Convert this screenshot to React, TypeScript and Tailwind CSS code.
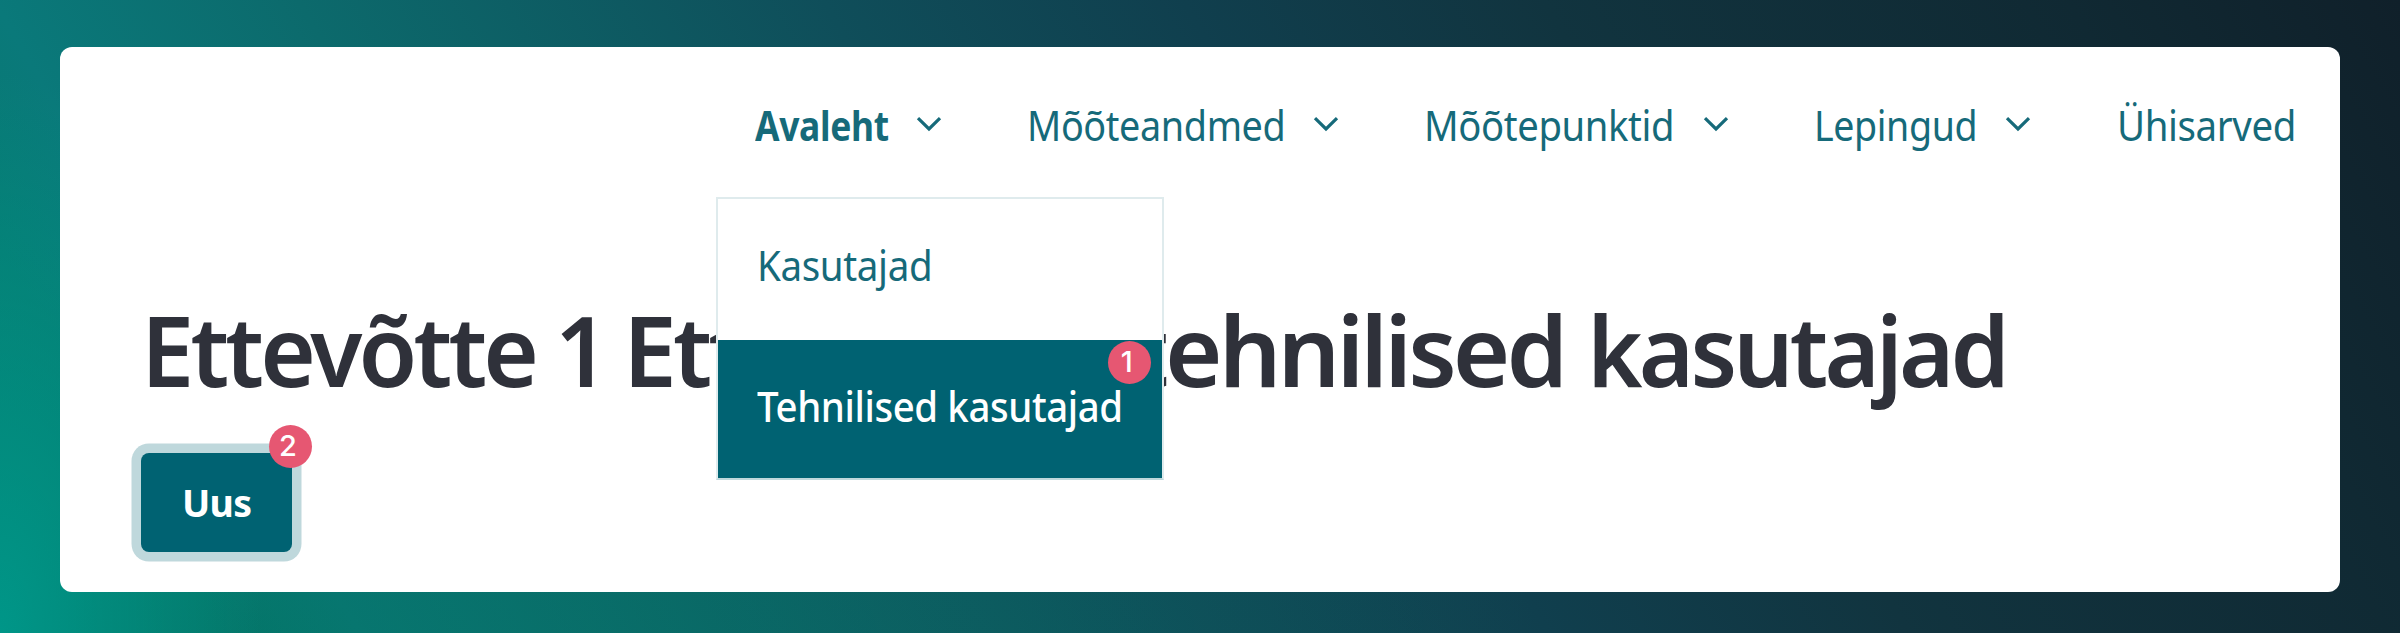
import { useLayoutEffect, useRef, useState } from "react";

type FitProps = { text: string; width: number; className?: string };

/* Text squeezed horizontally so that its line takes exactly `width` pixels. */
function Fit({ text, width, className = "" }: FitProps) {
  const ref = useRef<HTMLSpanElement>(null);
  const [scale, setScale] = useState(1);
  useLayoutEffect(() => {
    if (ref.current) setScale(width / ref.current.offsetWidth);
  }, [width, text]);
  return (
    <span className={`block shrink-0 whitespace-nowrap ${className}`} style={{ width }}>
      <span ref={ref} className="inline-block origin-left" style={{ transform: `scaleX(${scale})` }}>
        {text}
      </span>
    </span>
  );
}

function Chevron() {
  return (
    <svg viewBox="0 0 26 16" className="-mt-[3px] h-4 w-[26px] shrink-0" fill="none" stroke="#166a7a" strokeWidth="3.2">
      <path d="M2 2.2 L13 13 L24 2.2" />
    </svg>
  );
}

function Badge({ n, className }: { n: number; className: string }) {
  return (
    <span
      className={`absolute flex size-[43px] items-center justify-center rounded-full bg-[#e65772] pr-1.5 pb-0.5 font-['Inter',sans-serif] text-[29px] leading-none font-medium text-white ${className}`}
    >
      {n}
    </span>
  );
}

export default function App() {
  return (
    <div className="h-[633px] w-[2400px] bg-[radial-gradient(ellipse_260px_560px_at_0%_100%,#009688_0%,#00968800_100%),radial-gradient(ellipse_1300px_400px_at_10%_100%,#00705a60_0%,#00705a00_100%),linear-gradient(60deg,#067c70_0%,#067a72_8%,#0a797a_13%,#0c6a6c_24%,#0f4e5a_43%,#103f4e_56%,#11343f_69%,#102933_88%,#10202a_100%)] px-[60px] pt-[46.5px] font-['Noto_Sans',sans-serif]">
      <div className="relative flex h-[545px] flex-col rounded-xl bg-white">
        <nav className="flex h-[150px] items-center pt-[7px] pl-[695px] text-[41px] leading-none tracking-[-0.01em] text-[#166a7a]">
          <Fit text="Avaleht" width={134} className="font-bold" />
          <div className="ml-[27px] flex"><Chevron /></div>
          <Fit text="Mõõteandmed" width={258} className="ml-[85px]" />
          <div className="ml-[28px] flex"><Chevron /></div>
          <Fit text="Mõõtepunktid" width={250} className="ml-[85px]" />
          <div className="ml-[29px] flex"><Chevron /></div>
          <Fit text="Lepingud" width={163} className="ml-[85px]" />
          <div className="ml-[28px] flex"><Chevron /></div>
          <Fit text="Ühisarved" width={179} className="ml-[86px]" />
        </nav>
        <h1 className="mt-[92px] flex h-[120px] items-center pl-[81px] text-[98px] leading-none font-[650] tracking-[-0.04em] text-[#2f313a]">
          <Fit text="Ettevõtte" width={394} />
          <Fit text="1" width={50} className="ml-[20px]" />
          <Fit text="Ett" width={121} className="ml-[18px]" />
          <Fit text="tehnilised" width={435} className="ml-[385px]" />
          <Fit text="kasutajad" width={419} className="ml-[23px]" />
        </h1>
        <div className="mt-[44.5px] pl-[81px]">
          <button className="relative flex h-[99px] w-[151px] items-center justify-center rounded-lg bg-[#006272] pb-0.5 text-[38px] leading-none font-bold tracking-[-0.02em] text-white ring-[9.5px] ring-[#bfd8dc]">
            <Fit text="Uus" width={69} />
            <Badge n={2} className="-top-[28px] left-[128px]" />
          </button>
        </div>
        <div className="absolute top-[150px] left-[656px] w-[448px] border-2 border-[#dfebed] border-b-[#bfd8dc] bg-white text-[41px] leading-none tracking-[-0.01em]">
          <div className="flex h-[141px] items-center pb-[7px] pl-[39px] text-[#166a7a]">
            <Fit text="Kasutajad" width={175} />
          </div>
          <div className="relative flex h-[138px] items-center bg-[#006272] pb-1 pl-[39px] text-white">
            <Fit text="Tehnilised kasutajad" width={366} className="font-medium" />
            <Badge n={1} className="top-px right-[11px]" />
          </div>
        </div>
      </div>
    </div>
  );
}
